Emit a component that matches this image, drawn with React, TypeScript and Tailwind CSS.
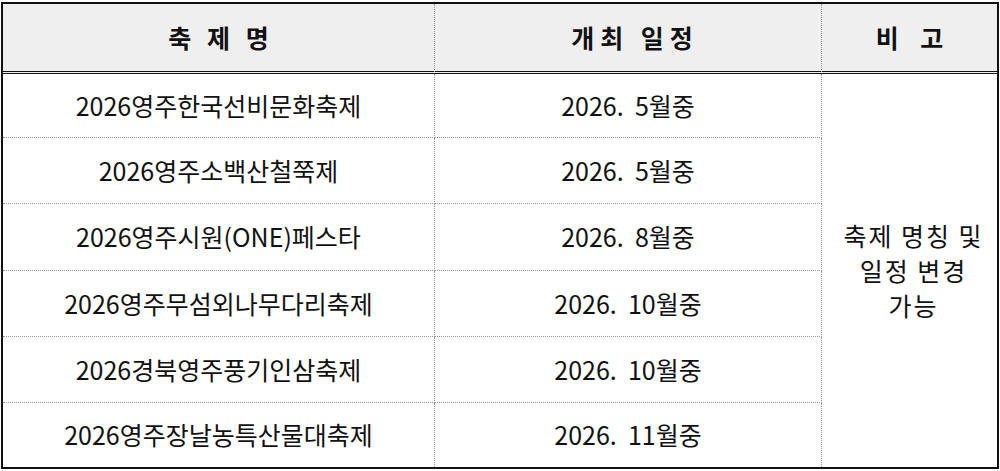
const festivals = [
  { name: '2026영주한국선비문화축제', date: '2026.  5월중', h: 'h-[64px]' },
  { name: '2026영주소백산철쭉제', date: '2026.  5월중', h: 'h-[66px]' },
  { name: '2026영주시원(ONE)페스타', date: '2026.  8월중', h: 'h-[67px]' },
  { name: '2026영주무섬외나무다리축제', date: '2026.  10월중', h: 'h-[66px]' },
  { name: '2026경북영주풍기인삼축제', date: '2026.  10월중', h: 'h-[66px]' },
  { name: '2026영주장날농특산물대축제', date: '2026.  11월중', h: 'h-[64px]' },
];

// 축제 일정 안내 표
export default function App() {
  return (
    <div className="w-[1000px] h-[471px] bg-white pl-[1px] pt-[2px] font-['Noto_Sans_CJK_KR','Noto_Sans',sans-serif] text-[#111]">
      <table className="w-[998px] border-separate border-spacing-0 border-2 border-[#111]">
        <thead>
          <tr className="h-[70px] bg-[#efefef]">
            <th className="w-[432px] border-b-[3px] border-double border-b-[#111] border-r border-r-[#999] [border-right-style:dotted] text-[25px] font-bold tracking-[5px] pl-[5px] whitespace-pre">
              축 제 명
            </th>
            <th className="w-[387px] border-b-[3px] border-double border-b-[#111] border-r border-r-[#999] [border-right-style:dotted] text-[25px] font-bold tracking-[6px] pl-[14px] whitespace-pre">
              개최 일정
            </th>
            <th className="border-b-[3px] border-double border-b-[#111] text-[25px] font-bold tracking-[8px] pl-[8px] whitespace-pre">
              비 고
            </th>
          </tr>
        </thead>
        <tbody>
          {festivals.map((f, i) => {
            const last = i === festivals.length - 1;
            return (
              <tr key={f.name} className={f.h}>
                <td
                  className={
                    last
                      ? 'text-center text-[25px] border-r border-dotted border-[#999]'
                      : 'text-center text-[25px] border-r border-b border-dotted border-[#999]'
                  }
                >
                  {f.name}
                </td>
                <td
                  className={
                    last
                      ? 'text-center text-[25px] whitespace-pre border-r border-dotted border-[#999]'
                      : 'text-center text-[25px] whitespace-pre border-r border-b border-dotted border-[#999]'
                  }
                >
                  {f.date}
                </td>
                {i === 0 && (
                  <td rowSpan={6} className="text-center text-[25px] leading-[35px] pl-2">
                    <div className="tracking-[2px] whitespace-pre">축제 명칭 및</div>
                    <div className="tracking-[2px] whitespace-pre">일정 변경</div>
                    <div className="tracking-[2px]">가능</div>
                  </td>
                )}
              </tr>
            );
          })}
        </tbody>
      </table>
    </div>
  );
}
